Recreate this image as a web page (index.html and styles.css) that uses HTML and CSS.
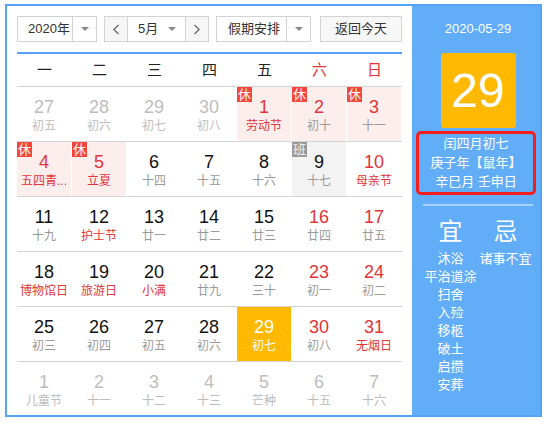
FILE: index.html
```html
<!DOCTYPE html>
<html lang="zh-CN">
<head>
<meta charset="utf-8">
<title>万年历</title>
<link rel="stylesheet" href="styles.css">
</head>
<body>
<div class="cal">
  <div class="main">
    <div class="toolbar">
      <div class="select year"><span class="val">2020年</span><span class="arr"><i class="tri"></i></span></div>
      <div class="month-group">
        <span class="nav"><svg width="8" height="11" viewBox="0 0 8 11"><polyline points="6.5,1 1.8,5.5 6.5,10" fill="none" stroke="#666" stroke-width="1.2"/></svg></span>
        <span class="mval"><span>5月</span><i class="tri"></i></span>
        <span class="nav"><svg width="8" height="11" viewBox="0 0 8 11"><polyline points="1.5,1 6.2,5.5 1.5,10" fill="none" stroke="#666" stroke-width="1.2"/></svg></span>
      </div>
      <div class="select holiday"><span class="val">假期安排</span><span class="arr"><i class="tri"></i></span></div>
      <button class="today-btn">返回今天</button>
    </div>
    <div class="week">
      <span>一</span><span>二</span><span>三</span><span>四</span><span>五</span><span class="wkd">六</span><span class="wkd">日</span>
    </div>
    <div class="days">
      <div class="row">
        <div class="cell other"><div class="n">27</div><div class="l">初五</div></div>
        <div class="cell other"><div class="n">28</div><div class="l">初六</div></div>
        <div class="cell other"><div class="n">29</div><div class="l">初七</div></div>
        <div class="cell other"><div class="n">30</div><div class="l">初八</div></div>
        <div class="cell rest red"><i class="badge">休</i><div class="n">1</div><div class="l fest">劳动节</div></div>
        <div class="cell rest red"><i class="badge">休</i><div class="n">2</div><div class="l">初十</div></div>
        <div class="cell rest red"><i class="badge">休</i><div class="n">3</div><div class="l">十一</div></div>
      </div>
      <div class="row">
        <div class="cell rest red"><i class="badge">休</i><div class="n">4</div><div class="l fest">五四青...</div></div>
        <div class="cell rest red"><i class="badge">休</i><div class="n">5</div><div class="l fest">立夏</div></div>
        <div class="cell"><div class="n">6</div><div class="l">十四</div></div>
        <div class="cell"><div class="n">7</div><div class="l">十五</div></div>
        <div class="cell"><div class="n">8</div><div class="l">十六</div></div>
        <div class="cell work"><i class="badge ban">班</i><div class="n">9</div><div class="l">十七</div></div>
        <div class="cell red"><div class="n">10</div><div class="l fest">母亲节</div></div>
      </div>
      <div class="row">
        <div class="cell"><div class="n">11</div><div class="l">十九</div></div>
        <div class="cell"><div class="n">12</div><div class="l fest">护士节</div></div>
        <div class="cell"><div class="n">13</div><div class="l">廿一</div></div>
        <div class="cell"><div class="n">14</div><div class="l">廿二</div></div>
        <div class="cell"><div class="n">15</div><div class="l">廿三</div></div>
        <div class="cell red"><div class="n">16</div><div class="l">廿四</div></div>
        <div class="cell red"><div class="n">17</div><div class="l">廿五</div></div>
      </div>
      <div class="row">
        <div class="cell"><div class="n">18</div><div class="l fest">博物馆日</div></div>
        <div class="cell"><div class="n">19</div><div class="l fest">旅游日</div></div>
        <div class="cell"><div class="n">20</div><div class="l fest">小满</div></div>
        <div class="cell"><div class="n">21</div><div class="l">廿九</div></div>
        <div class="cell"><div class="n">22</div><div class="l">三十</div></div>
        <div class="cell red"><div class="n">23</div><div class="l">初一</div></div>
        <div class="cell red"><div class="n">24</div><div class="l">初二</div></div>
      </div>
      <div class="row">
        <div class="cell"><div class="n">25</div><div class="l">初三</div></div>
        <div class="cell"><div class="n">26</div><div class="l">初四</div></div>
        <div class="cell"><div class="n">27</div><div class="l">初五</div></div>
        <div class="cell"><div class="n">28</div><div class="l">初六</div></div>
        <div class="cell today"><div class="n">29</div><div class="l">初七</div></div>
        <div class="cell red"><div class="n">30</div><div class="l">初八</div></div>
        <div class="cell red"><div class="n">31</div><div class="l fest">无烟日</div></div>
      </div>
      <div class="row last">
        <div class="cell other"><div class="n">1</div><div class="l">儿童节</div></div>
        <div class="cell other"><div class="n">2</div><div class="l">十一</div></div>
        <div class="cell other"><div class="n">3</div><div class="l">十二</div></div>
        <div class="cell other"><div class="n">4</div><div class="l">十三</div></div>
        <div class="cell other"><div class="n">5</div><div class="l">芒种</div></div>
        <div class="cell other"><div class="n">6</div><div class="l">十五</div></div>
        <div class="cell other"><div class="n">7</div><div class="l">十六</div></div>
      </div>
    </div>
  </div>
  <div class="side">
    <div class="date">2020-05-29</div>
    <div class="bigday">29</div>
    <div class="lunar-box">
      <div>闰四月初七</div>
      <div>庚子年【鼠年】</div>
      <div>辛巳月 壬申日</div>
    </div>
    <div class="sep"></div>
    <div class="yj-head"><span>宜</span><span>忌</span></div>
    <div class="yj">
      <ul class="list">
        <li>沐浴</li><li>平治道涂</li><li>扫舍</li><li>入殓</li><li>移柩</li><li>破土</li><li>启攒</li><li>安葬</li>
      </ul>
      <ul class="list">
        <li>诸事不宜</li>
      </ul>
    </div>
  </div>
</div>
</body>
</html>
```

FILE: styles.css
```css
* { box-sizing: border-box; }
html, body { margin: 0; padding: 0; background: #fff; }
body {
  font-family: "Liberation Sans", "Noto Sans CJK SC", sans-serif;
  color: #222;
}
.cal {
  margin: 4px 0 0 5px;
  width: 537px;
  height: 413px;
  border: 2px solid #54a3f6;
  display: flex;
}
.main {
  width: 405px;
  padding: 10px 10px 0 10px;
  background: #fff;
}
.toolbar {
  display: flex;
  height: 26px;
  gap: 7px;
}
.select, .month-group {
  display: flex;
  height: 26px;
  border: 1px solid #d2d2d2;
  background: #fff;
  font-size: 13px;
  line-height: 24px;
  color: #333;
  white-space: nowrap;
}
.select .val { padding-left: 10px; }
.year .val { width: 54px; }
.holiday .val { width: 69px; padding-left: 11px; }
.select .arr {
  width: 24px;
  flex: none;
  border-left: 1px solid #d2d2d2;
  display: flex;
  align-items: center;
  justify-content: center;
}
.tri {
  display: block;
  width: 0;
  height: 0;
  border-left: 4px solid transparent;
  border-right: 4px solid transparent;
  border-top: 4px solid #8a8a8a;
}
.month-group { width: 105px; }
.nav {
  width: 22px;
  background: #f6f6f6;
  display: flex;
  align-items: center;
  justify-content: center;
}
.mval {
  width: 59px;
  border-left: 1px solid #d2d2d2;
  border-right: 1px solid #d2d2d2;
  display: flex;
  align-items: center;
  justify-content: space-between;
  padding: 0 9px 0 10px;
}
.today-btn {
  margin-left: auto;
  width: 82px;
  height: 26px;
  border: 1px solid #d2d2d2;
  background: #f7f7f7;
  font-family: "Liberation Sans", "Noto Sans CJK SC", sans-serif;
  font-size: 13px;
  color: #333;
  padding: 0;
  line-height: 24px;
}
.week {
  margin-top: 10px;
  border-top: 2px solid #54a3f6;
  border-bottom: 1px solid #d4d4d4;
  height: 35px;
  display: grid;
  grid-template-columns: repeat(7, 55px);
  font-size: 15px;
  line-height: 32px;
  text-align: center;
  color: #222;
}
.week .wkd { color: #e3343a; }
.row {
  display: grid;
  grid-template-columns: repeat(7, 55px);
  height: 55px;
  border-bottom: 1px solid #d4d4d4;
}
.row.last { height: 53px; border-bottom: none; }
.cell {
  position: relative;
  text-align: center;
  border-right: 1px solid transparent;
  background-clip: padding-box;
}
.cell .n {
  margin-top: 9px;
  font-size: 18px;
  line-height: 22px;
  color: #111;
}
.cell .l {
  font-size: 12px;
  line-height: 16px;
  color: #9a9a9a;
  white-space: nowrap;
}
.cell .l.fest { color: #e3343a; }
.cell.red .n { color: #e3343a; }
.cell.other .n, .cell.other .l { color: #bdbdbd; }
.cell.rest { background-color: #fdeeee; }
.cell.work { background-color: #f3f3f3; }
.cell.today { background-color: #ffb900; }
.cell.today .n, .cell.today .l { color: #fff; }
.badge {
  position: absolute;
  left: 0;
  top: 0;
  width: 15px;
  height: 15px;
  background: #f6463a;
  color: #fff;
  font-style: normal;
  font-size: 13px;
  line-height: 15px;
  text-align: center;
}
.badge.ban { background: #9a9a9a; color: #f0f0f0; }
.side {
  width: 128px;
  background: #61adf8;
  color: #fff;
  padding: 14px 7px 0 11px;
}
.date {
  font-size: 13px;
  line-height: 18px;
  text-align: center;
}
.bigday {
  margin: 15px auto 0;
  width: 75px;
  height: 75px;
  border-radius: 3px;
  background: #ffb900;
  font-size: 48px;
  line-height: 75px;
  text-align: center;
}
.lunar-box {
  margin: 3px -3px 0 -7px;
  height: 64px;
  border: 3px solid #f41d1d;
  border-radius: 5px;
  font-size: 13px;
  line-height: 19px;
  padding-top: 0;
  text-align: center;
}
.sep {
  margin-top: 9px;
  height: 2px;
  background: #a7d0fa;
}
.yj-head {
  margin-top: 11px;
  display: grid;
  grid-template-columns: 55px 55px;
  font-size: 24px;
  line-height: 30px;
  text-align: center;
}
.yj {
  margin-top: 3px;
  display: grid;
  grid-template-columns: 55px 55px;
}
.list {
  list-style: none;
  margin: 0;
  padding: 0;
  font-size: 13px;
  line-height: 18px;
  text-align: center;
  white-space: nowrap;
}
```
